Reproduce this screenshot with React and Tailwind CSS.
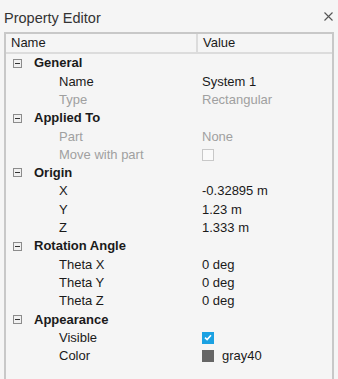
const groups = [
  {
    title: "General",
    rows: [
      { name: "Name", value: "System 1" },
      { name: "Type", value: "Rectangular", disabled: true },
    ],
  },
  {
    title: "Applied To",
    rows: [
      { name: "Part", value: "None", disabled: true },
      { name: "Move with part", check: false, disabled: true },
    ],
  },
  {
    title: "Origin",
    rows: [
      { name: "X", value: "-0.32895 m" },
      { name: "Y", value: "1.23 m" },
      { name: "Z", value: "1.333 m" },
    ],
  },
  {
    title: "Rotation Angle",
    rows: [
      { name: "Theta X", value: "0 deg" },
      { name: "Theta Y", value: "0 deg" },
      { name: "Theta Z", value: "0 deg" },
    ],
  },
  {
    title: "Appearance",
    rows: [
      { name: "Visible", check: true },
      { name: "Color", swatch: "#666666", value: "gray40" },
    ],
  },
];

function Collapse() {
  return (
    <span className="flex items-center justify-center w-[9px] h-[9px] border border-[#8c8c8c] bg-[#f0f0f0]">
      <span className="block w-[5px] h-px bg-[#333]" />
    </span>
  );
}

function Value({ row }) {
  if (row.check === false) {
    return <span className="block w-[12px] h-[12px] border border-[#c8c8c8] bg-[#fafafa]" />;
  }
  if (row.check === true) {
    return (
      <span className="flex items-center justify-center w-[12px] h-[12px] bg-[#1ba1e2]">
        <svg width="8" height="7" viewBox="0 0 8 7">
          <path d="M1 3.6 L3.1 5.6 L7 1.2" fill="none" stroke="white" strokeWidth="1.6" />
        </svg>
      </span>
    );
  }
  if (row.swatch) {
    return (
      <span className="flex items-center gap-[8px]">
        <span className="block w-[12px] h-[12px] bg-[#666666]" />
        <span>{row.value}</span>
      </span>
    );
  }
  return <span className={row.disabled ? "text-[#a0a0a0]" : ""}>{row.value}</span>;
}

export default function App() {
  return (
    <div className="w-[338px] h-[379px] overflow-hidden bg-[#f5f5f5] text-[13px] text-[#1a1a1a] font-['Liberation_Sans',Arial,sans-serif]">
      <div className="flex items-center justify-between h-[32px] pl-[4px] pr-[5px] pt-[5px]">
        <span className="text-[14.5px] text-[#333]">Property Editor</span>
        <svg width="9" height="9" viewBox="0 0 9 9" className="mb-[4px]">
          <path d="M0.5 0.5 L8.5 8.5 M8.5 0.5 L0.5 8.5" stroke="#555" strokeWidth="1.1" />
        </svg>
      </div>
      <div className="mx-[4px] border-t-2 border-l-2 border-r-2 border-[#c8c8c8] h-full">
        <div className="flex h-[20px] items-center border-b-2 border-[#dcdcdc]">
          <div className="w-[192px] pl-[5px] border-r-2 border-[#dcdcdc] h-full flex items-center">Name</div>
          <div className="pl-[5px]">Value</div>
        </div>
        {groups.map((g) => (
          <div key={g.title}>
            <div className="flex items-center h-[18.3px]">
              <span className="ml-[7px] mr-[12px]">
                <Collapse />
              </span>
              <span className="font-bold">{g.title}</span>
            </div>
            {g.rows.map((r) => (
              <div key={r.name} className="flex items-center h-[18.3px]">
                <span className={`w-[196px] pl-[53px] ${r.disabled ? "text-[#a0a0a0]" : ""}`}>{r.name}</span>
                <Value row={r} />
              </div>
            ))}
          </div>
        ))}
      </div>
    </div>
  );
}
